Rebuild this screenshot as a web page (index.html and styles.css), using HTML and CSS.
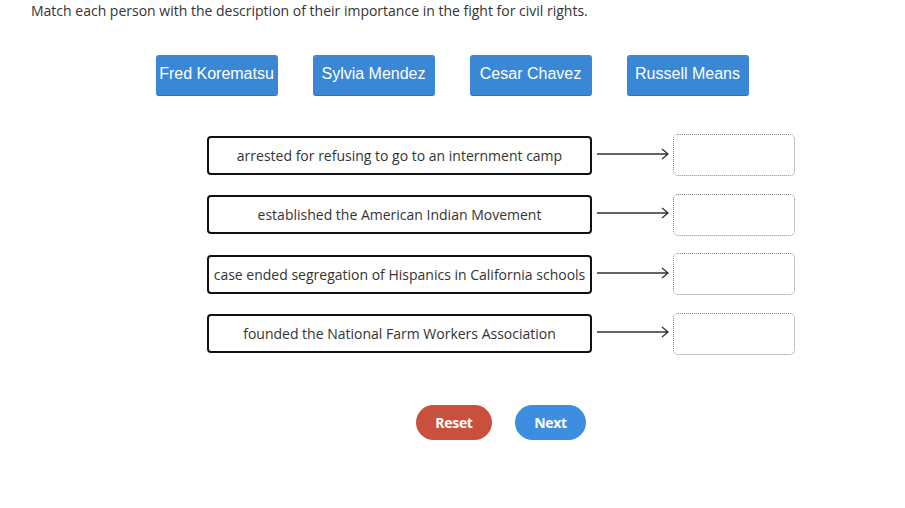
FILE: index.html
```html
<!DOCTYPE html>
<html lang="en">
<head>
    <meta charset="UTF-8">
    <meta name="viewport" content="width=device-width, initial-scale=1.0">
    <title>Matching - Civil Rights</title>
    <link rel="stylesheet" href="styles.css">
</head>
<body>
    <div class="question">
        <p class="prompt">Match each person with the description of their importance in the fight for civil rights.</p>

        <div class="choices">
            <div class="choice">Fred Korematsu</div>
            <div class="choice">Sylvia Mendez</div>
            <div class="choice">Cesar Chavez</div>
            <div class="choice">Russell Means</div>
        </div>

        <div class="pairs">
            <div class="pair">
                <div class="desc">arrested for refusing to go to an internment camp</div>
                <svg class="arrow" width="78" height="12" viewBox="0 0 78 12">
                    <path d="M2 6 H73 M67 1 L73 6 L67 11" fill="none" stroke="#333" stroke-width="1.3"/>
                </svg>
                <div class="target"></div>
            </div>
            <div class="pair">
                <div class="desc">established the American Indian Movement</div>
                <svg class="arrow" width="78" height="12" viewBox="0 0 78 12">
                    <path d="M2 6 H73 M67 1 L73 6 L67 11" fill="none" stroke="#333" stroke-width="1.3"/>
                </svg>
                <div class="target"></div>
            </div>
            <div class="pair">
                <div class="desc">case ended segregation of Hispanics in California schools</div>
                <svg class="arrow" width="78" height="12" viewBox="0 0 78 12">
                    <path d="M2 6 H73 M67 1 L73 6 L67 11" fill="none" stroke="#333" stroke-width="1.3"/>
                </svg>
                <div class="target"></div>
            </div>
            <div class="pair">
                <div class="desc">founded the National Farm Workers Association</div>
                <svg class="arrow" width="78" height="12" viewBox="0 0 78 12">
                    <path d="M2 6 H73 M67 1 L73 6 L67 11" fill="none" stroke="#333" stroke-width="1.3"/>
                </svg>
                <div class="target"></div>
            </div>
        </div>

        <div class="actions">
            <button class="btn btn-reset">Reset</button>
            <button class="btn btn-next">Next</button>
        </div>
    </div>
</body>
</html>
```

FILE: styles.css
```css
body {
    margin: 0;
    padding: 0;
    background: #fff;
    font-family: "Open Sans", Arial, sans-serif;
    color: #333;
}
.question {
    width: 905px;
}
.prompt {
    margin: 0;
    padding: 1px 0 0 31px;
    font-size: 14px;
    line-height: 19px;
}
.choices {
    display: flex;
    justify-content: center;
    gap: 35px;
    margin-top: 35px;
    padding-right: 1px;
}
.choice {
    width: 122px;
    height: 41px;
    box-sizing: border-box;
    background: #3a87d6;
    border-bottom: 1px solid #2f73b8;
    border-radius: 3px;
    color: #fff;
    font-family: Arial, "Liberation Sans", sans-serif;
    font-size: 16px;
    line-height: 38px;
    text-align: center;
    white-space: nowrap;
}
.pairs {
    display: flex;
    flex-direction: column;
    gap: 17.5px;
    margin-top: 38px;
    padding-left: 207px;
}
.pair {
    display: flex;
    align-items: center;
    height: 42px;
}
.desc {
    width: 385px;
    height: 39px;
    box-sizing: border-box;
    border: 2px solid #111;
    border-radius: 4px;
    display: flex;
    align-items: center;
    justify-content: center;
    font-size: 14px;
    color: #333;
    white-space: nowrap;
}
.arrow {
    margin-left: 3px;
    margin-top: -3px;
}
.target {
    width: 122px;
    height: 42px;
    box-sizing: border-box;
    border: 1px dotted #888;
    border-radius: 5px;
}
.actions {
    display: flex;
    gap: 23px;
    margin-top: 50px;
    padding-left: 416px;
}
.btn {
    height: 35px;
    padding: 0;
    border: none;
    border-radius: 18px;
    color: #fff;
    font-family: "Open Sans", Arial, sans-serif;
    font-weight: bold;
    font-size: 14px;
    letter-spacing: -0.3px;
    cursor: pointer;
}
.btn-reset {
    width: 76px;
    background: #c9503c;
}
.btn-next {
    width: 71px;
    background: #3d8ede;
}
```
